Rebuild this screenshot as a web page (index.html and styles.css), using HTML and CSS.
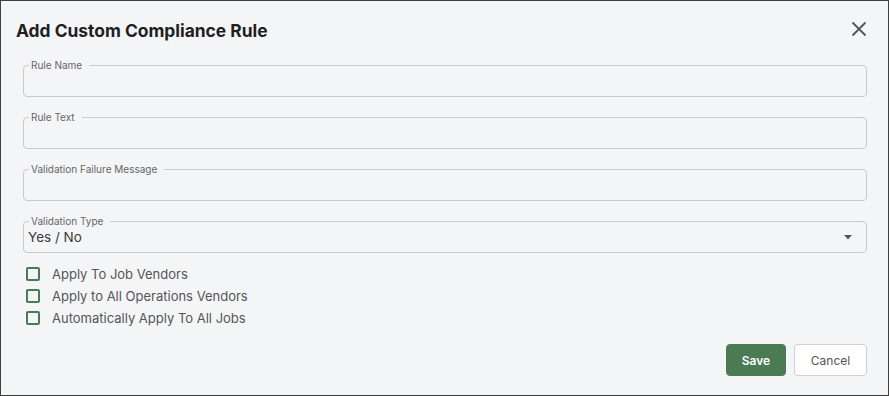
FILE: index.html
```html
<!DOCTYPE html>
<html lang="en">
	<head>
		<meta charset="UTF-8" />
		<meta name="viewport" content="width=device-width, initial-scale=1.0" />
		<title>Add Custom Compliance Rule</title>
		<link rel="stylesheet" href="styles.css">
	</head>
	<body>
		<div class="dialog">
			<div class="dialog-header">
				<h2 class="dialog-title">Add Custom Compliance Rule</h2>
				<button class="close" aria-label="Close">
					<svg width="16" height="16" viewBox="0 0 16 16">
						<path d="M1.5 1.5 L14.5 14.5 M14.5 1.5 L1.5 14.5" stroke="#555" stroke-width="1.8" fill="none" />
					</svg>
				</button>
			</div>

			<div class="fields">
				<fieldset class="field">
					<legend>Rule Name</legend>
					<input type="text" />
				</fieldset>
				<fieldset class="field">
					<legend>Rule Text</legend>
					<input type="text" />
				</fieldset>
				<fieldset class="field">
					<legend>Validation Failure Message</legend>
					<input type="text" />
				</fieldset>
				<fieldset class="field select">
					<legend>Validation Type</legend>
					<div class="select-value">
						<span>Yes / No</span>
						<svg width="8" height="5" viewBox="0 0 8 5">
							<path d="M0 0 L8 0 L4 4.5 Z" fill="#555" />
						</svg>
					</div>
				</fieldset>
			</div>

			<div class="checks">
				<label class="check"><span class="box"></span>Apply To Job Vendors</label>
				<label class="check"><span class="box"></span>Apply to All Operations Vendors</label>
				<label class="check"><span class="box"></span>Automatically Apply To All Jobs</label>
			</div>

			<div class="actions">
				<button class="btn btn-save">Save</button>
				<button class="btn btn-cancel">Cancel</button>
			</div>
		</div>
	</body>
</html>
```

FILE: styles.css
```css
* {
	box-sizing: border-box;
}
body {
	margin: 0;
	font-family: Inter, "Noto Sans", sans-serif;
	background: #f4f5f7;
}
.dialog {
	width: 889px;
	height: 396px;
	border: 1px solid #3f3f3f;
	background: #f4f5f7;
	padding: 0 21px 0 22px;
}
.dialog-header {
	display: flex;
	justify-content: space-between;
	align-items: center;
	height: 58px;
	margin-left: -7px;
}
.dialog-title {
	margin: 0;
	font-size: 17.4px;
	font-weight: 700;
	color: #1f1f1f;
}
.close {
	border: 0;
	background: none;
	padding: 0;
	margin-right: 0;
	margin-bottom: 2px;
	display: flex;
}
.fields {
	display: flex;
	flex-direction: column;
	gap: 14px;
}
.field {
	margin: 0;
	padding: 0 5px;
	border: 1px solid #c9cacc;
	border-radius: 4px;
	height: 38px;
	min-width: 0;
}
.field legend {
	font-size: 10px;
	line-height: 12px;
	color: #666;
	padding: 0 7px 0 2px;
	margin-top: -1px;
}
.field input {
	display: block;
	width: 100%;
	border: 0;
	background: transparent;
	height: 22px;
	outline: none;
}
.select-value {
	display: flex;
	justify-content: space-between;
	align-items: center;
	height: 22px;
	margin-top: -1px;
	font-size: 13.5px;
	color: #3a3a3a;
	padding-right: 9px;
	margin-left: -1px;
}
.checks {
	display: flex;
	flex-direction: column;
	gap: 8px;
	margin-top: 14px;
	padding-left: 3px;
}
.check {
	display: flex;
	align-items: center;
	height: 14px;
	font-size: 13px;
	color: #555;
}
.box {
	width: 14px;
	height: 14px;
	border: 2px solid #4b7a53;
	border-radius: 2px;
	margin-right: 12px;
}
.actions {
	display: flex;
	justify-content: flex-end;
	gap: 8px;
	margin-top: 19px;
}
.btn {
	height: 32px;
	border-radius: 4px;
	font-family: Inter, "Noto Sans", sans-serif;
	font-size: 12px;
}
.btn-save {
	width: 60px;
	background: #4b7a53;
	border: 1px solid #4b7a53;
	color: #fff;
	font-weight: 600;
}
.btn-cancel {
	width: 73px;
	background: #fff;
	border: 1px solid #cfd0d2;
	color: #555;
}
```
